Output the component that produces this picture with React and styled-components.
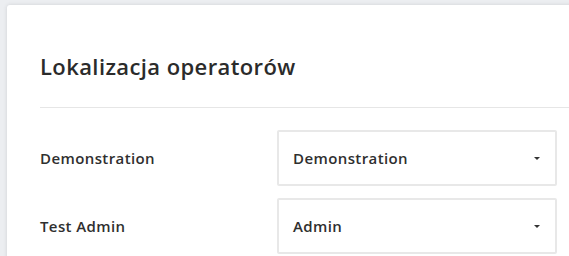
import React from 'react'
import styled, { createGlobalStyle } from 'styled-components'

const GlobalStyle = createGlobalStyle`
  html, body {
    margin: 0;
    padding: 0;
    overflow: hidden;
    background-color: #eceef1;
    font-family: "Open Sans", "Noto Sans", sans-serif;
    color: #2f2f2f;
  }
`

const operators = [
  { name: 'Demonstration', location: 'Demonstration' },
  { name: 'Test Admin', location: 'Admin' },
]

const App = () => {
  return (
    <>
      <GlobalStyle />
      <Page>
        <Card>
          <Title>Lokalizacja operatorów</Title>
          <Divider />
          <Rows>
            {operators.map((op, index) => (
              <Row key={index}>
                <Label>{op.name}</Label>
                <Select>
                  <span>{op.location}</span>
                  <Caret />
                </Select>
              </Row>
            ))}
          </Rows>
        </Card>
      </Page>
    </>
  )
}

const Page = styled.div`
  padding: 5px 0 0 7px;
  height: 256px;
  box-sizing: border-box;
`

const Card = styled.div`
  background-color: #fff;
  width: 640px;
  min-height: 300px;
  border-radius: 3px;
  box-shadow: 0 0 4px rgba(0, 0, 0, 0.12);
  padding: 46px 0 0 33px;
  box-sizing: border-box;
`

const Title = styled.h1`
  margin: 0;
  font-size: 22px;
  line-height: 30px;
  font-weight: 600;
  letter-spacing: 0.4px;
  color: #2b2b2b;
`

const Divider = styled.div`
  margin-top: 26px;
  height: 1px;
  background-color: #e6e6e6;
`

const Rows = styled.div`
  display: flex;
  flex-direction: column;
  gap: 12px;
  padding-top: 22px;
`

const Row = styled.div`
  display: grid;
  grid-template-columns: 237px 280px;
  align-items: center;
`

const Label = styled.div`
  font-size: 15px;
  font-weight: 600;
  letter-spacing: 0.4px;
  line-height: 20px;
`

const Select = styled.div`
  height: 56px;
  box-sizing: border-box;
  border: 2px solid #e8e8e8;
  border-radius: 2px;
  display: flex;
  align-items: center;
  justify-content: space-between;
  padding: 0 15px 0 14px;
  font-size: 15px;
  font-weight: 600;
  letter-spacing: 0.4px;
`

const Caret = styled.span`
  width: 0;
  height: 0;
  border-left: 3px solid transparent;
  border-right: 3px solid transparent;
  border-top: 3px solid #333;
`

export default App
